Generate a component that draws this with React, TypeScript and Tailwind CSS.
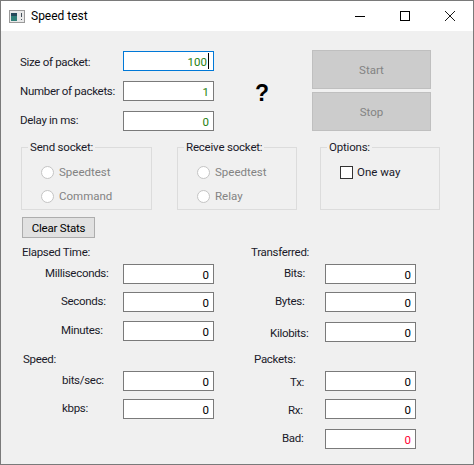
import type { ReactNode } from 'react';

function Field({ value, tone = 'text-black', focused = false }: { value: string; tone?: string; focused?: boolean }) {
  return (
    <div
      className={`flex h-5 w-[91px] shrink-0 items-center justify-end border bg-white pr-[4px] pt-[2px] text-[11.5px] ${tone} ${
        focused ? 'border-[#0078d7]' : 'border-[#7a7a7a]'
      }`}
    >
      {value}
      {focused && <span className="-mt-[2px] ml-px h-4 w-px bg-black" />}
    </div>
  );
}

function Row({
  label,
  labelClass,
  className = '',
  children,
}: {
  label: string;
  labelClass: string;
  className?: string;
  children: ReactNode;
}) {
  return (
    <div className={`flex items-center ${className}`}>
      <span className={`shrink-0 whitespace-nowrap tracking-[-0.3px] text-[#1a1a2a] ${labelClass}`}>{label}</span>
      {children}
    </div>
  );
}

function Radio({ label }: { label: string }) {
  return (
    <div className="flex h-6 items-center pl-[19px] text-[#838383]">
      <span className="h-[13px] w-[13px] rounded-full border border-[#c4c4c4] bg-white" />
      <span className="ml-[5px]">{label}</span>
    </div>
  );
}

function Group({ title, className, children }: { title: string; className: string; children: ReactNode }) {
  return (
    <fieldset className={`h-[71px] shrink-0 border border-[#dcdcdc] pt-[5px] ${className}`}>
      <legend className="ml-[6px] mt-px px-[2px] leading-4 tracking-[-0.2px] text-[#1a1a2a]">{title}</legend>
      {children}
    </fieldset>
  );
}

function TitleIcon() {
  return (
    <svg width="16" height="13" viewBox="0 0 16 13" className="ml-[8px] shrink-0">
      <rect x="0.5" y="0.5" width="15" height="12" fill="#e8e8e8" stroke="#9a9a9a" />
      <rect x="2" y="3" width="6" height="8" fill="#2f7f78" />
      <rect x="2" y="3" width="6" height="3" fill="#24485a" />
      <rect x="12" y="3" width="1" height="4" fill="#44505a" />
      <rect x="12" y="9" width="1" height="1" fill="#44505a" />
    </svg>
  );
}

export default function App() {
  return (
    <div
      className="flex h-[465px] w-[474px] flex-col overflow-hidden border border-[#7a7a7a] bg-[#f0f0f0] text-[11.5px] leading-4"
      style={{ fontFamily: 'Roboto, sans-serif' }}
    >
      {/* Title bar */}
      <div className="flex h-[30px] shrink-0 items-center bg-white text-black">
        <TitleIcon />
        <span className="ml-[6px] flex-1 text-[12px]">Speed test</span>
        <div className="flex w-[45px] justify-center">
          <svg width="10" height="10" viewBox="0 0 10 10">
            <path d="M0 5.5H10" stroke="#000" />
          </svg>
        </div>
        <div className="flex w-[45px] justify-center">
          <svg width="10" height="10" viewBox="0 0 10 10">
            <rect x="0.5" y="0.5" width="9" height="9" fill="none" stroke="#000" />
          </svg>
        </div>
        <div className="flex w-[46px] justify-center">
          <svg width="10" height="10" viewBox="0 0 10 10">
            <path d="M0 0L10 10M10 0L0 10" stroke="#000" strokeWidth="0.9" />
          </svg>
        </div>
      </div>

      {/* Packet settings and start/stop */}
      <div className="flex items-start pt-[20px]">
        <div className="flex w-[213px] flex-col gap-[10px] pl-[19px]">
          <Row label="Size of packet:" labelClass="w-[103px] pt-[2px]">
            <Field value="100" tone="text-[#1f7f10]" focused />
          </Row>
          <Row label="Number of packets:" labelClass="w-[103px]">
            <Field value="1" tone="text-[#1f7f10]" />
          </Row>
          <Row label="Delay in ms:" labelClass="w-[103px] pb-[2px]">
            <Field value="0" tone="text-[#1f7f10]" />
          </Row>
        </div>
        <span
          className="ml-[41px] mt-[28px] w-[57px] text-[23px] font-bold leading-7 text-black"
          style={{ fontFamily: '"Liberation Sans", sans-serif' }}
        >
          ?
        </span>
        <div className="-mt-px flex flex-col gap-[3px]">
          <button className="h-[39px] w-[119px] border border-[#bfbfbf] bg-[#cccccc] text-[#838383]">Start</button>
          <button className="h-[39px] w-[119px] border border-[#bfbfbf] bg-[#cccccc] text-[#838383]">Stop</button>
        </div>
      </div>

      {/* Socket groups */}
      <div className="mt-[8px] flex pl-[20px]">
        <Group title="Send socket:" className="w-[131px]">
          <Radio label="Speedtest" />
          <Radio label="Command" />
        </Group>
        <Group title="Receive socket:" className="ml-[25px] w-[120px]">
          <Radio label="Speedtest" />
          <Radio label="Relay" />
        </Group>
        <Group title="Options:" className="ml-[23px] w-[120px]">
          <div className="flex h-6 items-center pl-[19px] text-[#1a1a2a]">
            <span className="h-[13px] w-[13px] border border-[#333333] bg-white" />
            <span className="ml-[4px]">One way</span>
          </div>
        </Group>
      </div>

      <div className="mt-[7px] pl-[21px]">
        <button className="h-[21px] w-[73px] border border-[#adadad] bg-[#e1e1e1] tracking-[-0.2px] text-black">
          Clear Stats
        </button>
      </div>

      {/* Stats */}
      <div className="mt-[6px] flex">
        <div className="flex w-[224px] flex-col">
          <span className="pl-[21px] tracking-[-0.3px] text-[#1a1a2a]">Elapsed Time:</span>
          <Row label="Milliseconds:" labelClass="w-[122px] pb-[3px] pl-[44px]" className="mt-[4px]">
            <Field value="0" />
          </Row>
          <Row label="Seconds:" labelClass="w-[122px] pb-[3px] pl-[60px]" className="mt-[8px]">
            <Field value="0" />
          </Row>
          <Row label="Minutes:" labelClass="w-[122px] pb-[2px] pl-[60px]" className="mt-[9px]">
            <Field value="0" />
          </Row>
          <span className="mt-[10px] pl-[22px] tracking-[-0.3px] text-[#1a1a2a]">Speed:</span>
          <Row label="bits/sec:" labelClass="w-[122px] pb-[3px] pl-[61px]" className="mt-[4px]">
            <Field value="0" />
          </Row>
          <Row label="kbps:" labelClass="w-[122px] pb-[3px] pl-[61px]" className="mt-[8px]">
            <Field value="0" />
          </Row>
        </div>
        <div className="flex flex-col">
          <span className="pl-[26px] tracking-[-0.3px] text-[#1a1a2a]">Transferred:</span>
          <Row label="Bits:" labelClass="w-[100px] pb-[3px] pl-[59px]" className="mt-[4px]">
            <Field value="0" />
          </Row>
          <Row label="Bytes:" labelClass="w-[100px] pb-[3px] pl-[50px]" className="mt-[8px]">
            <Field value="0" />
          </Row>
          <Row label="Kilobits:" labelClass="w-[100px] pt-[2px] pl-[45px]" className="mt-[10px]">
            <Field value="0" />
          </Row>
          <span className="mt-[9px] pl-[29px] tracking-[-0.3px] text-[#1a1a2a]">Packets:</span>
          <Row label="Tx:" labelClass="w-[100px] pt-[2px] pl-[65px]" className="mt-[4px]">
            <Field value="0" />
          </Row>
          <Row label="Rx:" labelClass="w-[100px] pt-[2px] pl-[63px]" className="mt-[8px]">
            <Field value="0" />
          </Row>
          <Row label="Bad:" labelClass="w-[100px] pb-[3px] pl-[57px]" className="mt-[10px]">
            <Field value="0" tone="text-[#ff0033]" />
          </Row>
        </div>
      </div>
    </div>
  );
}
